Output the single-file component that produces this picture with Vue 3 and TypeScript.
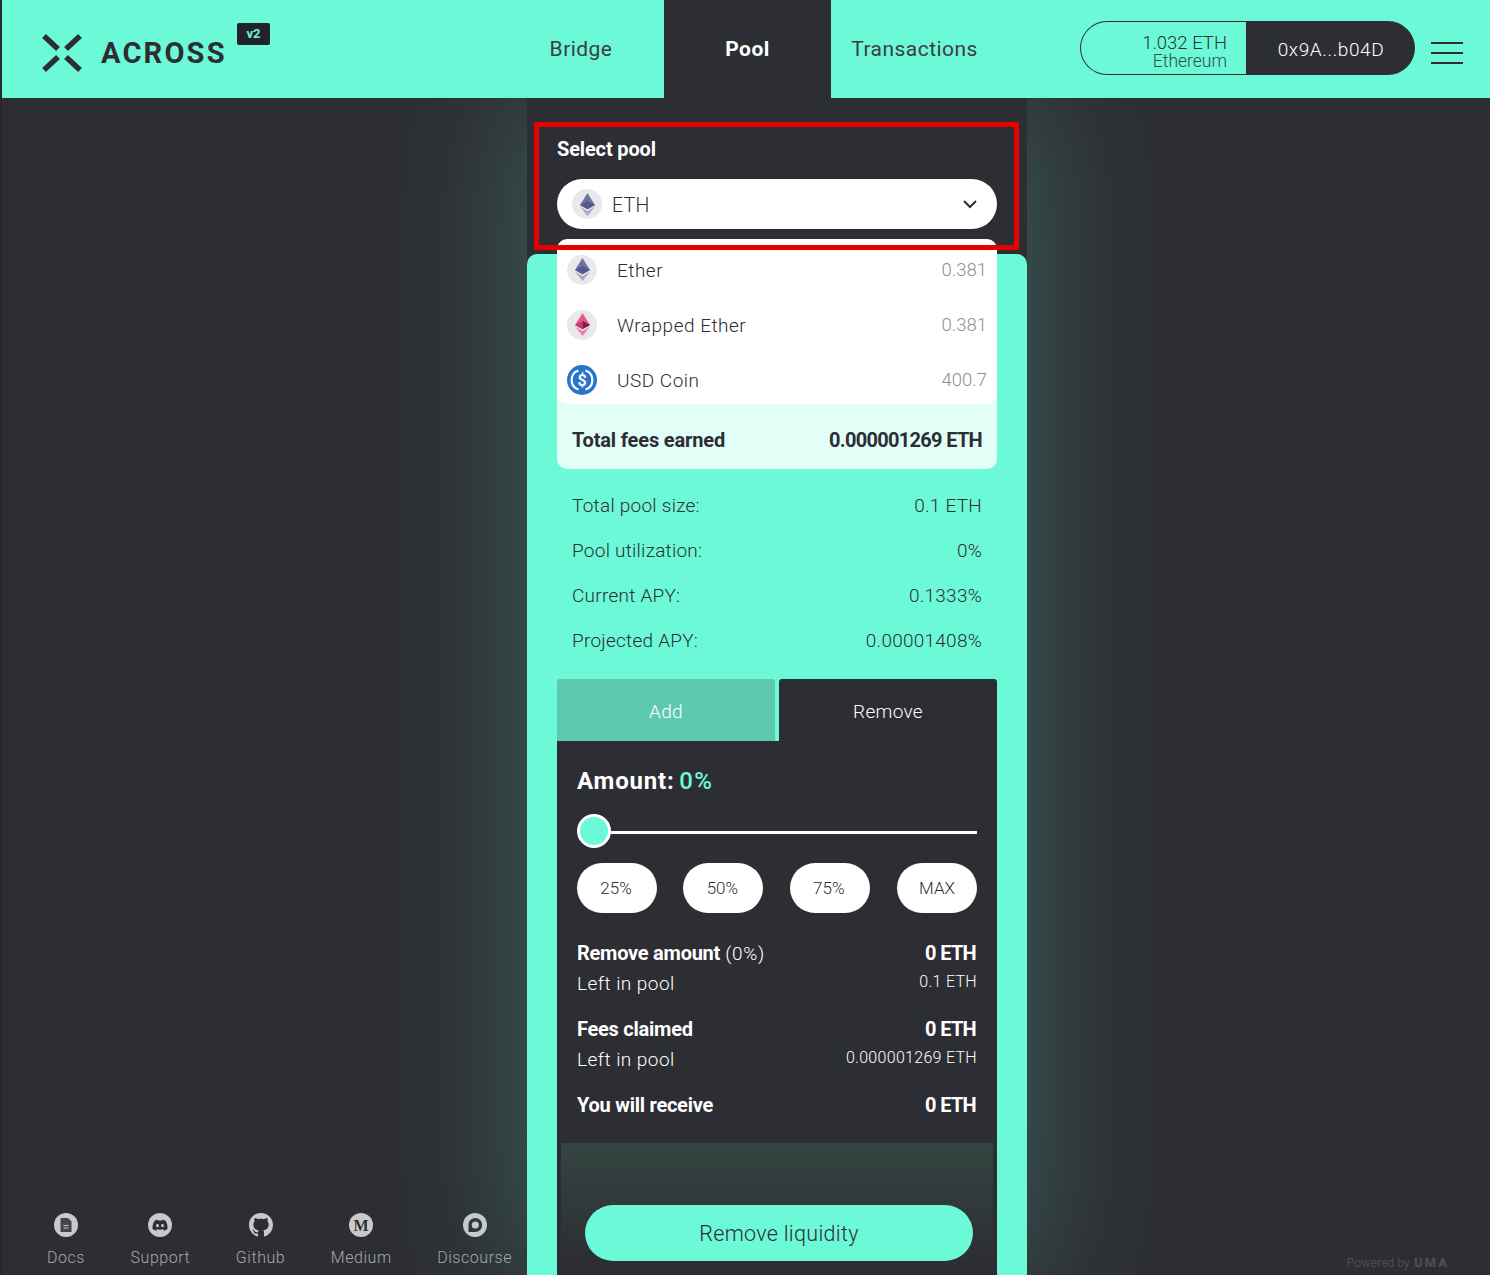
<script setup lang="ts">
const poolItems = [
  { name: "Ether", amount: "0.381", icon: "eth" },
  { name: "Wrapped Ether", amount: "0.381", icon: "weth" },
  { name: "USD Coin", amount: "400.7", icon: "usdc" },
];
const stats = [
  ["Total pool size:", "0.1 ETH"],
  ["Pool utilization:", "0%"],
  ["Current APY:", "0.1333%"],
  ["Projected APY:", "0.00001408%"],
];
const presets = ["25%", "50%", "75%", "MAX"];
const footerLinks = ["Docs", "Support", "Github", "Medium", "Discourse"];
</script>

<template>
  <div class="page">
    <header class="topbar">
      <div class="brand">
        <svg class="logo" width="40" height="40" viewBox="0 0 40 40">
          <g stroke="#2d2e33" stroke-width="5.5" fill="none">
            <path d="M2 3 L16 16" />
            <path d="M38 3 L24 16" />
            <path d="M2 37 L16 24" />
            <path d="M38 37 L24 24" />
          </g>
        </svg>
        <span class="wordmark">ACROSS</span>
        <span class="version">v2</span>
      </div>
      <nav class="tabs">
        <a class="tab">Bridge</a>
        <a class="tab active">Pool</a>
        <a class="tab">Transactions</a>
      </nav>
      <div class="wallet">
        <div class="balance">
          <div class="bal-amount">1.032 ETH</div>
          <div class="bal-net">Ethereum</div>
        </div>
        <div class="address">0x9A...b04D</div>
      </div>
      <div class="burger"><i></i><i></i><i></i></div>
    </header>

    <div class="body-row">
      <aside class="side-left">
        <div class="footer-links">
          <div v-for="link in footerLinks" :key="link" class="flink">
            <svg v-if="link === 'Github'" width="24" height="24" viewBox="0 0 16 16">
              <path fill="#c9c9ca" d="M8 0C3.58 0 0 3.58 0 8c0 3.54 2.29 6.53 5.47 7.59.4.07.55-.17.55-.38 0-.19-.01-.82-.01-1.49-2.01.37-2.53-.49-2.69-.94-.09-.23-.48-.94-.82-1.13-.28-.15-.68-.52-.01-.53.63-.01 1.08.58 1.23.82.72 1.21 1.87.87 2.33.66.07-.52.28-.87.51-1.07-1.78-.2-3.64-.89-3.64-3.95 0-.87.31-1.59.82-2.15-.08-.2-.36-1.02.08-2.12 0 0 .67-.21 2.2.82.64-.18 1.32-.27 2-.27.68 0 1.36.09 2 .27 1.53-1.04 2.2-.82 2.2-.82.44 1.1.16 1.92.08 2.12.51.56.82 1.27.82 2.15 0 3.07-1.87 3.75-3.65 3.95.29.25.54.73.54 1.48 0 1.07-.01 1.93-.01 2.2 0 .21.15.46.55.38A8.013 8.013 0 0016 8c0-4.42-3.58-8-8-8z" />
            </svg>
            <svg v-else width="24" height="24" viewBox="0 0 24 24">
              <circle cx="12" cy="12" r="12" fill="#c9c9ca" />
              <g v-if="link === 'Docs'">
                <path fill="#45464b" d="M6.500 5h7.500l3.500 3.500V19h-11z" />
                <path stroke="#c9c9ca" stroke-width="1" d="M9.500 12.500h5M9.500 15h5" />
              </g>
              <path
                v-else-if="link === 'Support'"
                fill="#2d2e33"
                fill-rule="evenodd"
                d="M17.300 7.700a12 12 0 0 0-3-.9l-.4.8a11 11 0 0 0-3.800 0l-.4-.8a12 12 0 0 0-3 .9C4.800 10.500 4.300 13.200 4.500 15.900a12 12 0 0 0 3.700 1.800l.8-1.200-1.200-.6.300-.2a8.500 8.500 0 0 0 7.800 0l.3.2-1.200.6.800 1.200a12 12 0 0 0 3.700-1.800c.3-3.100-.5-5.800-2-8.200zM9.500 14.200c-.8 0-1.400-.7-1.400-1.600s.6-1.600 1.400-1.600 1.400.7 1.400 1.600-.6 1.600-1.400 1.600zm5 0c-.8 0-1.400-.7-1.400-1.600s.6-1.600 1.400-1.600 1.400.7 1.400 1.600-.6 1.600-1.400 1.600z"
              />
              <text v-else-if="link === 'Medium'" x="12" y="17.500" text-anchor="middle" class="medium-m">M</text>
              <g v-else>
                <path fill="#2d2e33" d="M12.300 5C8.500 5 5.500 8 5.500 11.700V19h6.800c3.800 0 6.800-3.200 6.800-7s-3-7-6.800-7z" />
                <circle cx="12.300" cy="12" r="3.600" fill="#c9c9ca" />
              </g>
            </svg>
            <span>{{ link }}</span>
          </div>
        </div>
      </aside>

      <main class="column">
        <section class="select-section">
          <div class="select-title">Select pool</div>
          <div class="select-pill">
            <span class="token-badge">
              <svg width="15" height="23" viewBox="1 0 16 24" preserveAspectRatio="none">
                <path fill="#6f73a3" d="M9 0 L17 12.500 L9 17 L1 12.500z" />
                <path fill="#565a8c" d="M9 8 L17 12.500 L9 17 L1 12.500z" />
                <path fill="#a6a8c8" d="M1 14.200 L9 19 L17 14.200 L9 24z" />
              </svg>
            </span>
            <span class="select-label">ETH</span>
            <svg class="chevron" width="16" height="10" viewBox="0 0 16 10">
              <path d="M2 2 L8 8 L14 2" fill="none" stroke="#2d2e33" stroke-width="2" />
            </svg>
          </div>
          <ul class="menu">
            <li v-for="item in poolItems" :key="item.name" class="menu-item">
              <span v-if="item.icon !== 'usdc'" class="token-badge">
                <svg width="15" height="23" viewBox="1 0 16 24" preserveAspectRatio="none">
                  <template v-if="item.icon === 'eth'">
                    <path fill="#6f73a3" d="M9 0 L17 12.500 L9 17 L1 12.500z" />
                    <path fill="#565a8c" d="M9 8 L17 12.500 L9 17 L1 12.500z" />
                    <path fill="#a6a8c8" d="M1 14.200 L9 19 L17 14.200 L9 24z" />
                  </template>
                  <template v-else>
                    <path fill="#e9578f" d="M9 0 L17 12.500 L9 17 L1 12.500z" />
                    <path fill="#7f1c40" d="M9 8 L17 12.500 L9 17z" />
                    <path fill="#c23a6f" d="M9 8 L1 12.500 L9 17z" />
                    <path fill="#f07ca8" d="M1 14.200 L9 19 L17 14.200 L9 24z" />
                  </template>
                </svg>
              </span>
              <svg v-else class="usdc" width="30" height="30" viewBox="0 0 30 30">
                <circle cx="15" cy="15" r="15" fill="#2775ca" />
                <path d="M11.500 5.500a10 10 0 0 0 0 19M18.500 5.500a10 10 0 0 1 0 19" fill="none" stroke="#fff" stroke-width="2.200" />
                <text x="15" y="20.500" text-anchor="middle" class="usdc-sign">$</text>
              </svg>
              <span class="menu-name">{{ item.name }}</span>
              <span class="menu-amount">{{ item.amount }}</span>
            </li>
          </ul>
          <div class="highlight"></div>
        </section>

        <section class="card">
          <div class="fees-box">
            <span>Total fees earned</span>
            <span class="tight">0.000001269 ETH</span>
          </div>
          <div class="stats">
            <div v-for="row in stats" :key="row[0]" class="stat-row">
              <span>{{ row[0] }}</span>
              <span>{{ row[1] }}</span>
            </div>
          </div>
          <div class="action-tabs">
            <div class="action-tab add">Add</div>
            <div class="action-tab remove">Remove</div>
          </div>
          <div class="panel">
            <div class="amount-title">Amount: <em>0%</em></div>
            <div class="slider">
              <span class="thumb"></span>
              <span class="track"></span>
            </div>
            <div class="presets">
              <button v-for="p in presets" :key="p" class="preset">{{ p }}</button>
            </div>
            <div class="summary">
              <div class="sum-row top">
                <span><b>Remove amount</b> <span class="pct">(0%)</span></span>
                <b class="tight">0 ETH</b>
              </div>
              <div class="sum-row sub">
                <span>Left in pool</span>
                <small>0.1 ETH</small>
              </div>
              <div class="sum-row top gap">
                <b>Fees claimed</b>
                <b class="tight">0 ETH</b>
              </div>
              <div class="sum-row sub">
                <span>Left in pool</span>
                <small>0.000001269 ETH</small>
              </div>
              <div class="sum-row top gap">
                <b>You will receive</b>
                <b class="tight">0 ETH</b>
              </div>
            </div>
            <div class="cta-wrap">
              <button class="cta">Remove liquidity</button>
            </div>
          </div>
        </section>
      </main>

      <aside class="side-right">
        <div class="powered">
          Powered by <span class="uma">UMA</span>
        </div>
      </aside>
    </div>
  </div>
</template>

<style>
html,
body {
  margin: 0;
  height: 1275px;
  overflow: hidden;
  background: #2d2e33;
}
</style>

<style scoped>
.page {
  --teal: #6cf9d8;
  --dark: #2d2e33;
  width: 1490px;
  height: 1275px;
  overflow: hidden;
  display: flex;
  flex-direction: column;
  padding-left: 2px;
  box-sizing: border-box;
  background: #25272a;
  font-family: Roboto, "Liberation Sans", sans-serif;
  color: var(--dark);
}
.topbar {
  position: relative;
  z-index: 2;
  flex: none;
  height: 98px;
  background: var(--teal);
  display: flex;
  align-items: stretch;
}
.brand {
  width: 496px;
  box-sizing: border-box;
  display: flex;
  align-items: center;
  padding-left: 40px;
  padding-top: 8px;
}
.wordmark {
  width: 128px;
  flex: none;
  margin-left: 19px;
  font-size: 29px;
  font-weight: 700;
  letter-spacing: 2.200px;
  line-height: 1;
  white-space: nowrap;
}
.version {
  align-self: flex-start;
  margin-top: 15px;
  margin-left: 8px;
  width: 33px;
  height: 22px;
  background: #22232a;
  border-radius: 2px;
  color: var(--teal);
  font-size: 13px;
  font-weight: 700;
  line-height: 22px;
  text-align: center;
}
.tabs {
  display: flex;
}
.tab {
  width: 167px;
  display: flex;
  align-items: center;
  justify-content: center;
  box-sizing: border-box;
  font-size: 21px;
  letter-spacing: 0.45px;
  color: #3b3c41;
}
.tab:first-child {
  width: 166px;
}
.tab.active {
  background: var(--dark);
  color: #fff;
  font-weight: 700;
}
.wallet {
  margin-left: 82px;
  margin-top: 21px;
  height: 54px;
  width: 335px;
  display: flex;
}
.balance {
  width: 166px;
  box-sizing: border-box;
  border: 1px solid var(--dark);
  border-right: 0;
  border-radius: 27px 0 0 27px;
  padding: 12px 19px 0 0;
  text-align: right;
}
.bal-amount {
  font-size: 18.500px;
  line-height: 18px;
  font-weight: 300;
}
.bal-net {
  font-size: 17.500px;
  line-height: 18px;
  opacity: 0.85;
  font-weight: 300;
}
.address {
  flex: 1;
  background: var(--dark);
  color: #fff;
  border-radius: 0 27px 27px 0;
  display: flex;
  align-items: center;
  justify-content: center;
  padding: 2px 0 0 1px;
  font-size: 19px;
  font-weight: 300;
  letter-spacing: 0.6px;
}
.burger {
  margin-left: 16px;
  margin-top: 42px;
  width: 32px;
  display: flex;
  flex-direction: column;
  gap: 8px;
}
.burger i {
  display: block;
  height: 2px;
  background: var(--dark);
}

.body-row {
  flex: 1;
  min-height: 0;
  display: flex;
  background: var(--dark);
}
.side-left {
  width: 525px;
  flex: none;
  display: flex;
  align-items: flex-end;
}
.footer-links {
  display: flex;
  gap: 45.500px;
  padding: 0 0 7px 45px;
}
.flink {
  display: flex;
  flex-direction: column;
  align-items: center;
  gap: 11px;
  color: #a6a7aa;
  font-size: 16px;
  line-height: 20px;
  font-weight: 300;
  letter-spacing: 0.55px;
  position: relative;
  z-index: 1;
}
.medium-m {
  font-family: "Liberation Serif", serif;
  font-size: 16px;
  font-weight: 700;
  fill: #2d2e33;
  letter-spacing: 0;
}

.column {
  width: 500px;
  flex: none;
  background: var(--dark);
  box-shadow: 0 0 130px rgba(108, 249, 216, 0.26);
  position: relative;
  z-index: 1;
}
.select-section {
  position: relative;
  z-index: 2;
  height: 156px;
  box-sizing: border-box;
  padding: 39px 30px 0;
}
.select-title {
  color: #fff;
  font-size: 20px;
  font-weight: 700;
  line-height: 24px;
  letter-spacing: -0.15px;
}
.select-pill {
  margin-top: 18px;
  height: 50px;
  background: #fff;
  border-radius: 25px;
  display: flex;
  align-items: center;
  padding: 0 19px 0 15px;
}
.token-badge {
  flex: none;
  width: 30px;
  height: 30px;
  border-radius: 50%;
  background: #e9e9ec;
  display: flex;
  align-items: center;
  justify-content: center;
}
.select-label {
  margin-left: 10px;
  padding-top: 3px;
  font-size: 19.500px;
  font-weight: 300;
  letter-spacing: 0.3px;
}
.chevron {
  margin-left: auto;
}
.menu {
  position: absolute;
  left: 30px;
  right: 30px;
  top: 141px;
  height: 165px;
  margin: 0;
  padding: 3px 10px 0;
  box-sizing: border-box;
  list-style: none;
  background: #fff;
  border-radius: 10px;
  overflow: hidden;
}
.menu-item {
  height: 55px;
  display: flex;
  align-items: center;
}
.menu-name {
  margin-left: 20px;
  padding-top: 1px;
  font-size: 19px;
  font-weight: 300;
  letter-spacing: 0.5px;
}
.menu-amount {
  margin-left: auto;
  padding-top: 1px;
  font-size: 18.500px;
  font-weight: 300;
  color: #8f9093;
}
.usdc {
  flex: none;
}
.usdc-sign {
  font-family: Roboto, sans-serif;
  font-size: 16px;
  font-weight: 700;
  fill: #fff;
}
.highlight {
  position: absolute;
  left: 7px;
  top: 24px;
  width: 485px;
  height: 128px;
  box-sizing: border-box;
  border: 5px solid #e60000;
  pointer-events: none;
}

.card {
  background: var(--teal);
  border-radius: 10px 10px 0 0;
  padding: 0 30px;
  height: 1100px;
  box-sizing: border-box;
}
.fees-box {
  height: 215px;
  box-sizing: border-box;
  background: #e1fef7;
  border-radius: 0 0 10px 10px;
  padding: 0 15px 17px;
  display: flex;
  align-items: flex-end;
  justify-content: space-between;
  font-size: 20px;
  font-weight: 700;
  line-height: 24px;
  letter-spacing: -0.15px;
}
.fees-box .tight {
  letter-spacing: -0.7px;
}
.stats {
  margin-top: 14px;
  padding: 0 15px;
}
.stat-row {
  height: 45px;
  display: flex;
  align-items: center;
  justify-content: space-between;
  font-size: 19px;
  font-weight: 300;
  letter-spacing: 0.25px;
}
.action-tabs {
  margin-top: 16px;
  display: grid;
  grid-template-columns: 218px 218px;
  gap: 4px;
}
.action-tab {
  height: 62px;
  box-sizing: border-box;
  padding-top: 2px;
  border-radius: 3px 3px 0 0;
  color: #fff;
  display: flex;
  align-items: center;
  justify-content: center;
  font-size: 19px;
  font-weight: 300;
  letter-spacing: 0.3px;
}
.action-tab.add {
  background: #5ec9b1;
}
.action-tab.remove {
  background: var(--dark);
}
.panel {
  background: var(--dark);
  padding: 26px 20px 0;
  color: #fff;
}
.amount-title {
  font-size: 24px;
  font-weight: 700;
  line-height: 28px;
  letter-spacing: 0.8px;
  word-spacing: -2px;
}
.amount-title em {
  font-style: normal;
  color: var(--teal);
  font-weight: 500;
  letter-spacing: 1.4px;
}
.slider {
  margin-top: 19px;
  height: 34px;
  display: flex;
  align-items: center;
}
.thumb {
  flex: none;
  width: 34px;
  height: 34px;
  box-sizing: border-box;
  border-radius: 50%;
  border: 3px solid #fff;
  background: var(--teal);
}
.track {
  flex: 1;
  height: 3px;
  margin-top: 2px;
  background: #fff;
}
.presets {
  margin-top: 15px;
  display: flex;
  gap: 26.400px;
}
.preset {
  width: 80px;
  height: 50px;
  border: 0;
  border-radius: 25px;
  background: #fff;
  color: var(--dark);
  font-family: inherit;
  font-size: 17px;
  font-weight: 300;
  padding: 0 2px 0 0;
}
.preset:last-child {
  margin-left: auto;
  padding: 0;
}
.summary {
  margin-top: 25px;
}
.sum-row {
  height: 30px;
  display: flex;
  align-items: center;
  justify-content: space-between;
  font-size: 19px;
  font-weight: 300;
  letter-spacing: 0.45px;
}
.sum-row b {
  font-weight: 700;
  font-size: 20px;
  letter-spacing: -0.25px;
}
.sum-row b.tight {
  letter-spacing: -0.7px;
  margin-right: 1px;
}
.sum-row.gap {
  margin-top: 16px;
}
.sum-row.sub small {
  font-size: 16px;
  margin-top: -4px;
  letter-spacing: 0.3px;
}
.pct {
  letter-spacing: 0.7px;
}
.cta-wrap {
  margin: 23px -16px 0;
  padding: 62px 20px 14px 24px;
  background: linear-gradient(180deg, #344441 0%, var(--dark) 90%);
}
.cta {
  display: block;
  width: 100%;
  height: 56px;
  border: 0;
  border-radius: 28px;
  background: var(--teal);
  color: var(--dark);
  font-family: inherit;
  font-size: 21.500px;
  font-weight: 300;
  letter-spacing: 0.3px;
  padding: 1px 0 0;
}

.side-right {
  flex: 1;
  display: flex;
  align-items: flex-end;
  justify-content: flex-end;
}
.powered {
  padding: 0 41px 5px 0;
  color: #4b4c51;
  font-size: 12px;
  line-height: 14px;
  letter-spacing: 0.1px;
}
.uma {
  font-size: 13px;
  font-weight: 900;
  letter-spacing: 2px;
  margin-left: 1px;
}
</style>
